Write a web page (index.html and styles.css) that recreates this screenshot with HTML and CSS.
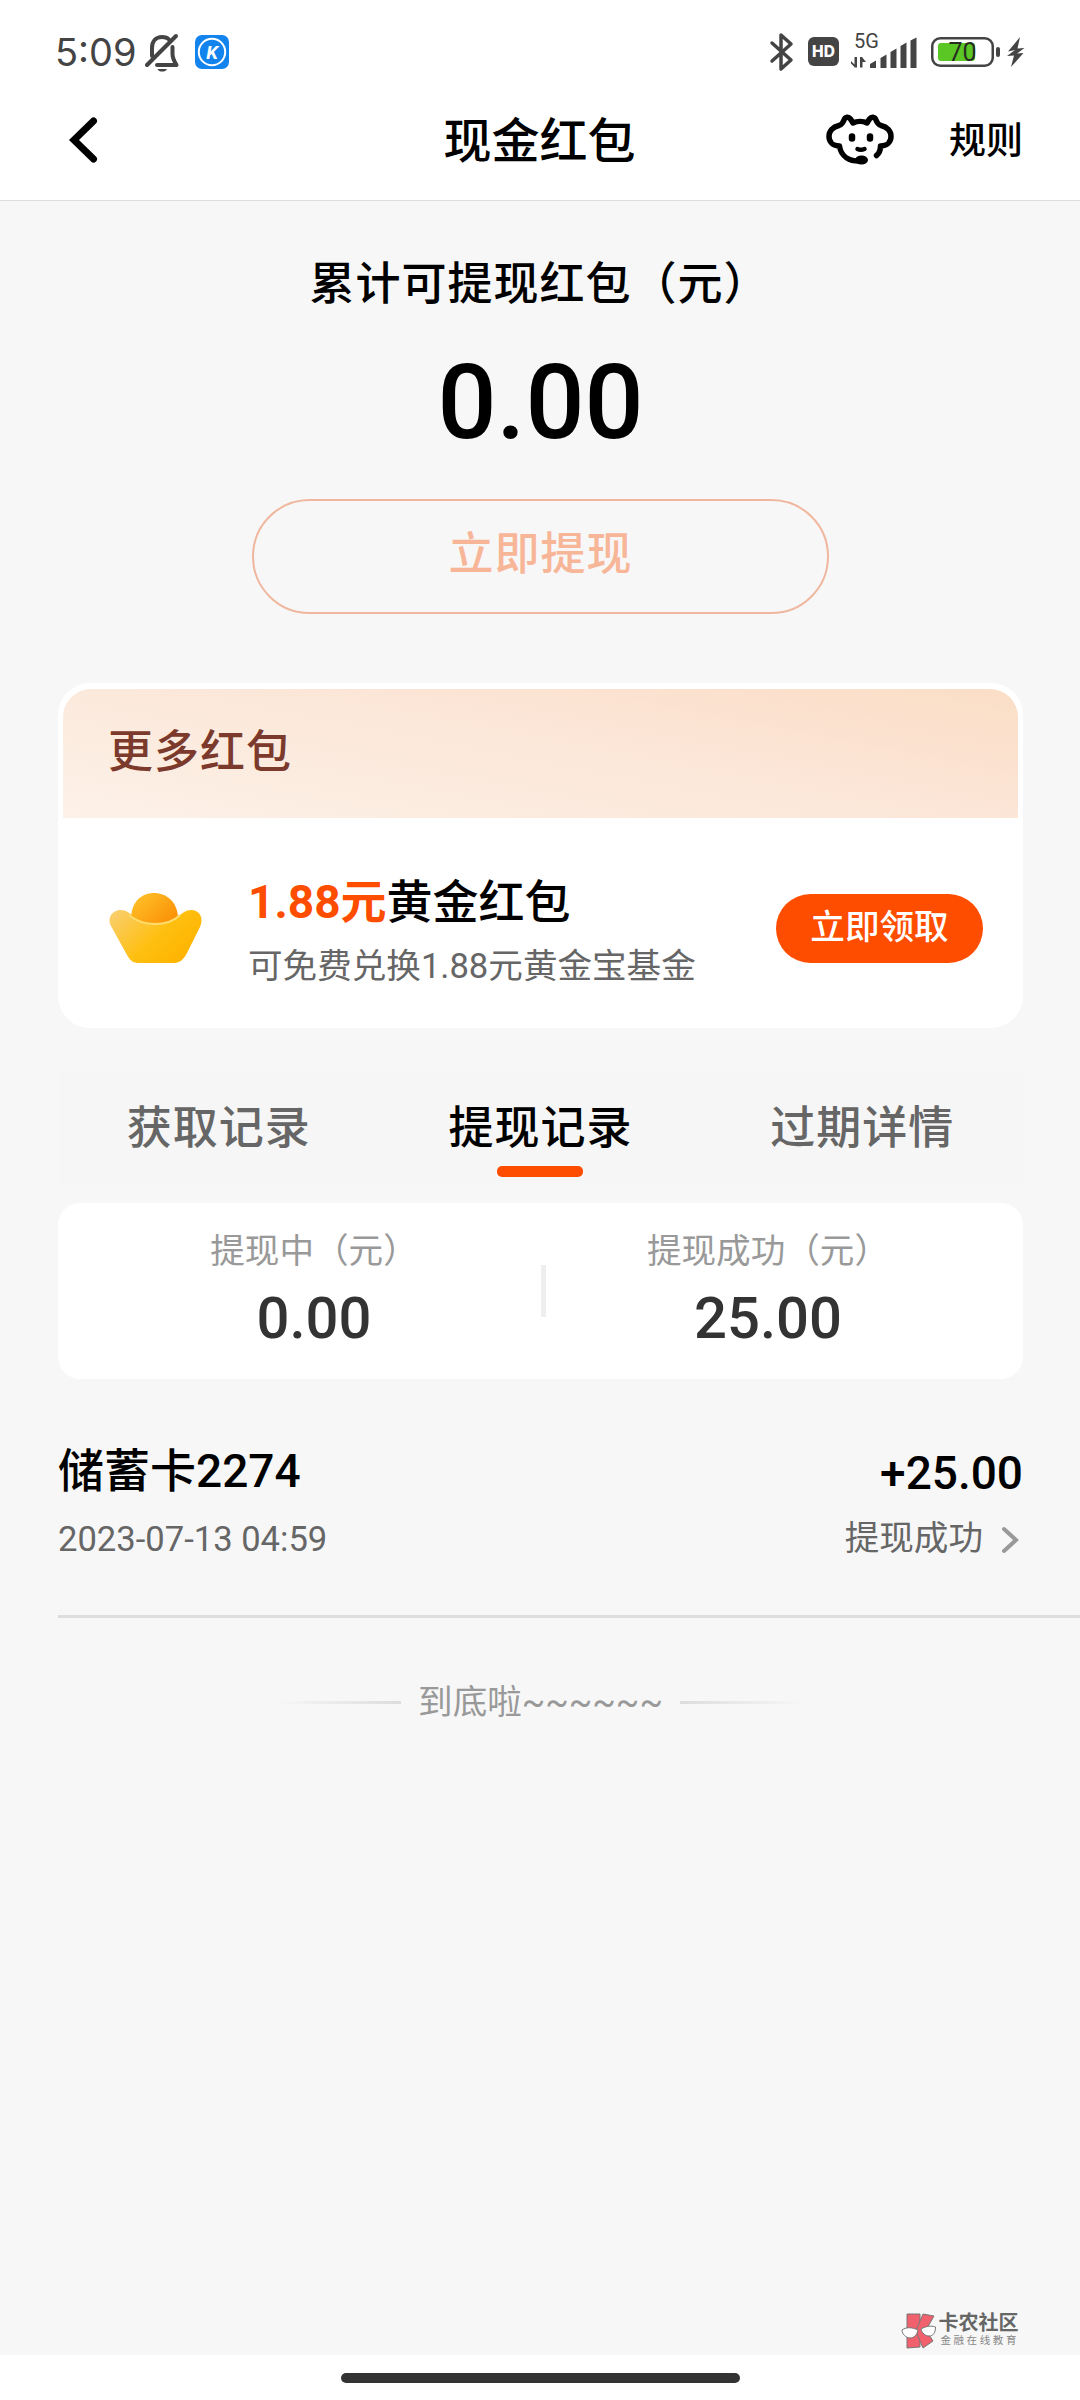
FILE: index.html
```html
<!DOCTYPE html>
<html lang="zh-CN">
<head>
<meta charset="utf-8">
<meta name="viewport" content="width=device-width">
<title>现金红包</title>
<link rel="stylesheet" href="styles.css">
</head>
<body>
<div class="screen">
  <div class="status">
    <div class="status-left">
      <span class="time">5:09</span>
      <svg class="bell" width="36" height="38" viewBox="0 0 36 38" fill="none" stroke="#444" stroke-width="4" stroke-linecap="round" stroke-linejoin="round">
        <path d="M8 22V14C8 7 12 3 18 3C21 3 23.500 3.800 25 5.500"/>
        <path d="M28.500 13V20C28.500 24 30 27 32.500 31H13"/>
        <path d="M3 31L32 2"/>
        <path d="M13.500 35H23C22 37 20.500 37.500 18.200 37.500C16 37.500 14.500 37 13.500 35Z" fill="#444" stroke="none"/>
      </svg>
      <svg class="app" width="34" height="34" viewBox="0 0 34 34">
        <rect width="34" height="34" rx="7" fill="#1383ee"/>
        <circle cx="17" cy="17" r="13.200" fill="none" stroke="#fff" stroke-width="2"/>
        <text class="app-letter" x="17" y="23.500" text-anchor="middle">K</text>
      </svg>
    </div>
    <div class="status-right">
      <svg class="bluetooth" width="24" height="38" viewBox="0 0 24 38" fill="none" stroke="#444" stroke-width="3.500" stroke-linejoin="round" stroke-linecap="round">
        <path d="M2 10L21 27L11 36V2L21 11L2 28"/>
      </svg>
      <span class="hd">HD</span>
      <svg class="signal" width="68" height="38" viewBox="0 0 68 38" fill="#444">
        <text class="net" x="3" y="15">5G</text>
        <path d="M0 28L6 34H3.500L0 30.500ZM3.500 24H6V34.500H3.500ZM9 24H11L15 29H11.500V34.500H9Z"/>
        <path d="M19 31L25 27.500V35H19ZM29.500 25L35.500 21.500V35H29.500ZM39.500 19L45.500 15.500V35H39.500ZM49.500 13L55.500 9.500V35H49.500ZM59.500 7.500L65.500 4.500V35H59.500Z"/>
      </svg>
      <svg class="battery" width="70" height="30" viewBox="0 0 70 30">
        <rect x="1.250" y="1.250" width="60.500" height="27.500" rx="8" fill="none" stroke="#444" stroke-width="2.500"/>
        <rect x="7" y="6" width="37" height="18" rx="3" fill="#5ac725"/>
        <rect x="65" y="10" width="4" height="10" rx="2" fill="#444"/>
        <text class="level" x="31.500" y="24" text-anchor="middle">70</text>
      </svg>
      <svg class="bolt" width="18" height="30" viewBox="0 0 18 30" fill="#444">
        <path d="M13 0L1 14.500L8 13L0 19L7 18.500L4 30L16.500 16L10 16.500L17.500 11L10.500 11.500Z"/>
      </svg>
    </div>
  </div>

  <header class="nav">
    <svg class="back" width="30" height="46" viewBox="0 0 30 46" fill="none" stroke="#000" stroke-width="7" stroke-linecap="round" stroke-linejoin="miter">
      <path d="M24.500 4L5 23L24.500 42"/>
    </svg>
    <h1 class="nav-title">现金红包</h1>
    <div class="nav-actions">
      <svg class="dog" width="68" height="52" viewBox="0 0 68 52" fill="none" stroke="#000" stroke-width="5.500" stroke-linecap="round" stroke-linejoin="round">
        <path d="M33 47C24 47 15 43 13.500 32C7 32 3 28 3 22.500C3 17 7 13 13 11.500C16 10.500 17 9 18 6C19.500 2.500 22.500 2.500 24.500 5L27 9C31 7 37 7 41 9L43.500 5C45.500 2.500 48.500 2.500 50 6C51 9 52 10.500 55 11.500C61 13 65 17 65 22.500C65 28 61 32 54.500 32C54.500 36 53 39.500 50.500 41.500"/>
        <path d="M26 22.500V24.500M44 22.500V24.500" stroke-width="6.500"/>
        <path d="M31.500 35C33.500 36 36 36 38.500 35" stroke-width="4.500"/>
        <ellipse cx="35.500" cy="46" rx="6.500" ry="4.500" fill="#000" stroke="none"/>
      </svg>
      <span class="rules">规则</span>
    </div>
  </header>

  <main class="content">
    <section class="summary">
      <div class="summary-label">累计可提现红包（元）</div>
      <div class="summary-amount">0.00</div>
      <div class="withdraw">立即提现</div>
    </section>

    <section class="more">
      <h2 class="more-head">更多红包</h2>
      <div class="offer">
        <svg class="ingot" width="94" height="72" viewBox="0 0 94 72">
          <defs>
            <linearGradient id="boat" x1="0" y1="0" x2="1" y2="0.600">
              <stop offset="0" stop-color="#f9cf74"/><stop offset="0.600" stop-color="#ffbf10"/><stop offset="1" stop-color="#ffb400"/>
            </linearGradient>
            <linearGradient id="dome" x1="0" y1="0" x2="1" y2="0.700">
              <stop offset="0" stop-color="#ffc62b"/><stop offset="1" stop-color="#fb9208"/>
            </linearGradient>
          </defs>
          <path d="M12 17C3 17-2 25 2 33L18 62C22 69 25 70 31 70H64C70 70 73 68 77 62L91 34C95 25 91 17 82 17C72 17 70 29 47 29C24 29 22 17 12 17Z" fill="url(#boat)"/>
          <path d="M22 24C23 8 33 0 45 0C58 0 68 9 69 24C66 28 57 30 46 30C35 30 25 28 22 24Z" fill="url(#dome)"/>
          <path d="M20 22C27 28 36 31 46 31C56 31 65 28 71 22" fill="none" stroke="#ffdc6b" stroke-width="2"/>
        </svg>
        <div class="offer-text">
          <div class="offer-title"><b class="offer-sum">1.88元</b>黄金红包</div>
          <div class="offer-sub">可免费兑换1.88元黄金宝基金</div>
        </div>
        <div class="claim">立即领取</div>
      </div>
    </section>

    <nav class="tabs">
      <span class="tab">获取记录</span>
      <span class="tab tab-active">提现记录</span>
      <span class="tab">过期详情</span>
    </nav>

    <section class="stats">
      <div class="stat">
        <span class="stat-label">提现中（元）</span>
        <span class="stat-value">0.00</span>
      </div>
      <i class="stat-divider"></i>
      <div class="stat stat-done">
        <span class="stat-label">提现成功（元）</span>
        <span class="stat-value">25.00</span>
      </div>
    </section>

    <section class="record">
      <div class="record-main">
        <span class="record-name">储蓄卡2274</span>
        <span class="record-amount">+25.00</span>
      </div>
      <div class="record-meta">
        <span class="record-time">2023-07-13 04:59</span>
        <span class="record-state">提现成功
          <svg class="chevron" width="18" height="28" viewBox="0 0 18 28" fill="none" stroke="#999" stroke-width="4" stroke-linecap="round">
            <path d="M3 3L15 14L3 25"/>
          </svg>
        </span>
      </div>
    </section>

    <div class="end"><i class="fade"></i><span>到底啦~~~~~~</span><i class="fade fade-right"></i></div>

    <div class="brand">
      <svg class="brand-mark" width="36" height="36" viewBox="0 0 36 36" stroke="#777" stroke-width="1">
        <path d="M6 1H19V34L6 35Z" fill="#f0606d"/>
        <path d="M22 1L33 3L25 17L32 28L22 35L16 21V15Z" fill="#f0606d"/>
        <path d="M1 17C5 14 11 14 17 17C16 22 13 25 9 25C5 25 1 21 1 17Z" fill="#fff"/>
        <path d="M20 16C25 13 30 12.500 34.500 14C34.500 20 32 23 28 23C24 23 21 20 20 16Z" fill="#fff"/>
      </svg>
      <div class="brand-text">
        <span class="brand-name">卡农社区</span>
        <span class="brand-tag">金融在线教育</span>
      </div>
    </div>
  </main>

  <footer class="home"><i class="home-bar"></i></footer>
</div>
</body>
</html>
```
FILE: styles.css
```css
* { box-sizing: border-box; }

body {
  margin: 0;
  background: #fff;
  color: #000;
  font-family: Roboto, "Noto Sans CJK SC", sans-serif;
}

.screen {
  display: flex;
  flex-direction: column;
  width: 1080px;
  height: 2400px;
  overflow: hidden;
}

svg { display: block; flex: none; overflow: visible; }

/* Status bar */
.status {
  display: flex;
  justify-content: space-between;
  height: 84px;
  padding: 33px 55px 0 55px;
}
.status-left, .status-right { display: flex; align-items: flex-start; }
.time {
  width: 88px;
  font: 400 38px/38px Inter, sans-serif;
  color: #444;
}
.bell { margin: 1px 15px 0 1px; }
.app { margin-top: 2px; }
.app-letter { font: italic 700 19px Roboto, sans-serif; fill: #fff; }
.hd {
  width: 31px;
  height: 29px;
  margin: 4px 12px 0 14px;
  border-radius: 6px;
  background: #444;
  color: #fff;
  font: 800 15.5px/29px Inter, sans-serif;
  text-align: center;
}
.net { font: 400 20px Roboto, sans-serif; }
.battery { margin: 4px 6px 0 12px; }
.level { font: 400 25px Roboto, sans-serif; fill: #262f22; }
.bolt { margin-top: 4px; }

/* Title bar */
.nav {
  display: grid;
  grid-template-columns: 1fr auto 1fr;
  align-items: center;
  height: 117px;
  padding: 0 57px 4px 66px;
  border-bottom: 1px solid #ddd;
}
.back { margin-left: 3px; }
.nav-title { margin: 4px 10px 0 0; font-size: 48px; line-height: 60px; font-weight: 500; }
.nav-actions { display: flex; align-items: center; justify-content: flex-end; gap: 55px; }
.rules { font-size: 37px; line-height: 44px; margin-top: 4px; font-weight: 500; }

/* Page */
.content {
  flex: 1;
  display: flex;
  flex-direction: column;
  padding: 54px 57px 5px 58px;
  background: #f7f7f7;
}

.summary { display: flex; flex-direction: column; align-items: center; font-weight: 500; }
.summary-label { margin-right: 2px; font-size: 45px; letter-spacing: 1px; line-height: 60px; }
.summary-amount { margin-top: 28px; font-size: 104px; line-height: 120px; }
.withdraw {
  width: 577px;
  height: 115px;
  margin-top: 36px;
  border: 2px solid #f0b79f;
  border-radius: 58px;
  color: #f8b699;
  font-size: 45px;
  letter-spacing: 1px;
  line-height: 108px;
  text-align: center;
}

/* Offers card */
.more {
  height: 345px;
  margin-top: 69px;
  padding: 6px 5px 0;
  border-radius: 32px;
  background: #fff;
}
.more-head {
  height: 129px;
  margin: 0;
  padding-left: 45px;
  border-radius: 28px 28px 0 0;
  background: linear-gradient(11deg, #fdf1e8 0%, #fbe8da 48%, #fce4d4 66%, #fadec6 100%);
  color: #7c3a2c;
  font-size: 45px;
  letter-spacing: 1px;
  font-weight: 500;
  line-height: 127px;
}
.offer { display: flex; align-items: flex-start; padding: 52px 35px 0 46px; }
.ingot { margin-top: 23px; }
.offer-text { flex: 1; padding-left: 45px; }
.offer-title { font-size: 46px; line-height: 64px; font-weight: 500; }
.offer-sum { color: #ff4d00; font-weight: 700; }
.offer-sub { font-size: 34.6px; line-height: 64px; color: #666; }
.claim {
  width: 207px;
  height: 69px;
  margin-top: 24px;
  border-radius: 35px;
  background: #ff4d00;
  color: #fff;
  font-size: 34.6px;
  font-weight: 500;
  line-height: 66px;
  text-align: center;
}

/* Record tabs */
.tabs {
  display: grid;
  grid-template-columns: repeat(3, 1fr);
  height: 112px;
  margin-top: 44px;
  background: #f6f6f6;
}
.tab {
  display: flex;
  flex-direction: column;
  align-items: center;
  padding-top: 27px;
  font-size: 45px;
  letter-spacing: 1px;
  line-height: 60px;
  font-weight: 500;
  color: #666;
}
.tab-active { color: #000; }
.tab-active::after {
  content: "";
  width: 86px;
  height: 11px;
  margin-top: 7px;
  border-radius: 5px;
  background: #ff4d00;
}

/* Totals */
.stats {
  display: flex;
  align-items: center;
  height: 176px;
  margin-top: 19px;
  padding: 0 0 2px 29px;
  border-radius: 22px;
  background: #fff;
}
.stat { display: flex; flex-direction: column; align-items: center; flex: none; width: 454px; }
.stat-done { width: 444px; }
.stat-label { font-size: 34.6px; line-height: 48px; color: #999; }
.stat-value { margin-top: 8px; font-size: 58px; line-height: 70px; font-weight: 500; color: #333; }
.stat-divider { width: 5px; height: 52px; margin-top: 2px; background: #eee; }

/* Withdrawal record */
.record {
  height: 239px;
  margin-right: -57px;
  padding: 62px 57px 0 0;
  border-bottom: 3px solid #ddd;
}
.record-main, .record-meta { display: flex; justify-content: space-between; }
.record-main { font-size: 46px; line-height: 60px; font-weight: 500; }
.record-amount { padding-top: 2px; }
.record-meta { margin-top: 6px; font-size: 34.6px; line-height: 60px; color: #666; }
.record-state { display: flex; align-items: center; line-height: 60px; margin-top: -2px; }
.chevron { margin: 4px 4px 0 18px; }

/* End of list */
.end {
  display: flex;
  align-items: center;
  justify-content: center;
  gap: 17px;
  margin-top: 59px;
  font-size: 34.6px;
  line-height: 50px;
  color: #999;
}
.fade { width: 125px; height: 3px; background: linear-gradient(90deg, rgba(221,221,221,0), #ddd); }
.fade-right { background: linear-gradient(270deg, rgba(221,221,221,0), #ddd); }

/* Community mark */
.brand { display: flex; justify-content: flex-end; gap: 1px; margin-top: auto; padding-right: 4px; }
.brand-mark { margin-top: 4px; }
.brand-text { display: flex; flex-direction: column; }
.brand-name { font-size: 20px; line-height: 28px; font-weight: 700; color: #666; }
.brand-tag {
  margin-bottom: 5px;
  padding-left: 2px;
  font-size: 10.5px;
  line-height: 8px;
  letter-spacing: 2.6px;
  color: #888;
}

/* Gesture bar */
.home { display: flex; justify-content: center; height: 45px; padding-top: 18px; background: #fff; }
.home-bar { width: 399px; height: 10px; border-radius: 5px; background: #333; }
```
